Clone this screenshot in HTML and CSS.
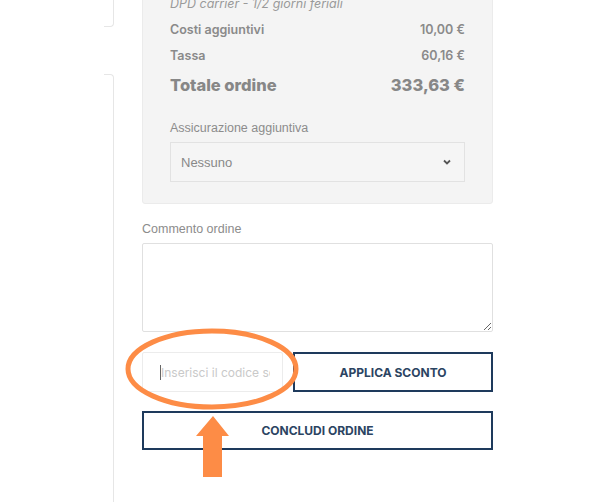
FILE: index.html
```html
<!DOCTYPE html>
<html lang="it">
<head>
    <meta charset="UTF-8">
    <meta name="viewport" content="width=device-width, initial-scale=1.0">
    <title>Checkout</title>
    <link rel="stylesheet" href="styles.css">
</head>
<body>
  <div class="pagina">
    <aside class="laterale">
      <div class="box-alto"></div>
      <div class="box-basso"></div>
    </aside>

    <main class="colonna">
      <section class="riepilogo">
        <div class="riga corriere">DPD carrier - 1/2 giorni feriali</div>
        <div class="riga"><span>Costi aggiuntivi</span><span>10,00 €</span></div>
        <div class="riga"><span>Tassa</span><span>60,16 €</span></div>
        <div class="riga totale"><span>Totale ordine</span><span>333,63 €</span></div>

        <label class="etichetta etichetta-panel">Assicurazione aggiuntiva</label>
        <div class="scelta">
          <span>Nessuno</span>
          <svg width="10" height="8" viewBox="0 0 10 8"><polyline points="2,2.5 5,5.5 8,2.5" fill="none" stroke="#555" stroke-width="1.8"/></svg>
        </div>
      </section>

      <label class="etichetta etichetta-commento">Commento ordine</label>
      <textarea class="commento"></textarea>

      <div class="sconto">
        <div class="codice">
          <input type="text" placeholder="Inserisci il codice sconto">
        </div>
        <button class="bottone">APPLICA SCONTO</button>
      </div>
      <button class="bottone concludi">CONCLUDI ORDINE</button>
    </main>

    <!-- evidenziazione sopra il campo codice -->
    <svg class="evidenzia" width="607" height="502" viewBox="0 0 607 502">
      <ellipse cx="212" cy="369" rx="84" ry="38" fill="none" stroke="#fd8c46" stroke-width="5"/>
      <polygon points="213,416 229,436 222,436 222,477 203,477 203,436 196,436" fill="#fd8c46"/>
    </svg>
  </div>
</body>
</html>
```

FILE: styles.css
```css
* {
box-sizing: border-box;
}

body {
margin: 0;
background-color: #fff;
overflow: hidden;
}

.pagina {
display: flex;
gap: 28px;
margin-top: -30px;
}

.laterale {
width: 114px;
display: flex;
flex-direction: column;
align-items: flex-end;
gap: 47px;
}

.box-alto {
width: 10px;
height: 57px;
border-right: 1px solid #e6e6e6;
border-bottom: 1px solid #e6e6e6;
border-bottom-right-radius: 4px;
}

.box-basso {
width: 10px;
height: 428px;
border-right: 1px solid #e6e6e6;
border-top: 1px solid #e6e6e6;
border-top-right-radius: 4px;
}

.colonna {
width: 351px;
display: flex;
flex-direction: column;
}

.riepilogo {
background-color: #f4f4f4;
border: 1px solid #ebebeb;
border-radius: 3px;
padding: 19px 27px 21px;
display: flex;
flex-direction: column;
font-family: Inter, sans-serif;
color: #8a8a8a;
}

.riga {
display: flex;
justify-content: space-between;
align-items: center;
height: 26px;
font-size: 12.5px;
font-weight: 600;
}

.corriere {
font-style: italic;
font-weight: 400;
color: #9a9a9a;
}

.totale {
height: 34px;
font-size: 16.5px;
font-weight: 800;
color: #878787;
}

.etichetta {
font-family: "Liberation Sans", Arial, sans-serif;
font-size: 12.5px;
color: #8c8c8c;
line-height: 18px;
}

.etichetta-panel {
margin-top: 17px;
}

.scelta {
margin-top: 5px;
height: 40px;
border: 1px solid #e2e2e2;
background-color: #f5f5f5;
display: flex;
justify-content: space-between;
align-items: center;
padding: 0 12px 0 10px;
font-family: "Liberation Sans", Arial, sans-serif;
font-size: 13px;
color: #888;
}

.etichetta-commento {
margin-top: 16px;
}

.commento {
margin-top: 5px;
height: 89px;
width: 100%;
border: 1px solid #e0e0e0;
border-radius: 2px;
resize: vertical;
}

.sconto {
display: flex;
gap: 10px;
margin-top: 20px;
}

.codice {
position: relative;
width: 141px;
}

.codice::before {
content: "";
position: absolute;
left: 18px;
top: 13px;
width: 1px;
height: 15px;
background-color: #666;
}

.codice input {
width: 100%;
height: 40px;
border: 1px solid #ececec;
border-radius: 2px;
padding: 0 12px 0 18px;
font-family: Inter, sans-serif;
font-size: 12px;
outline: none;
}

.codice input::placeholder {
color: #c9c9c9;
}

.bottone {
flex: 1;
height: 40px;
background-color: #fff;
border: 2px solid #1e3a5c;
font-family: Inter, sans-serif;
font-size: 12px;
font-weight: 700;
color: #2b4462;
cursor: pointer;
}

.concludi {
flex: none;
width: 100%;
height: 39px;
margin-top: 19px;
}

.evidenzia {
position: absolute;
left: 0;
top: 0;
pointer-events: none;
}
```
